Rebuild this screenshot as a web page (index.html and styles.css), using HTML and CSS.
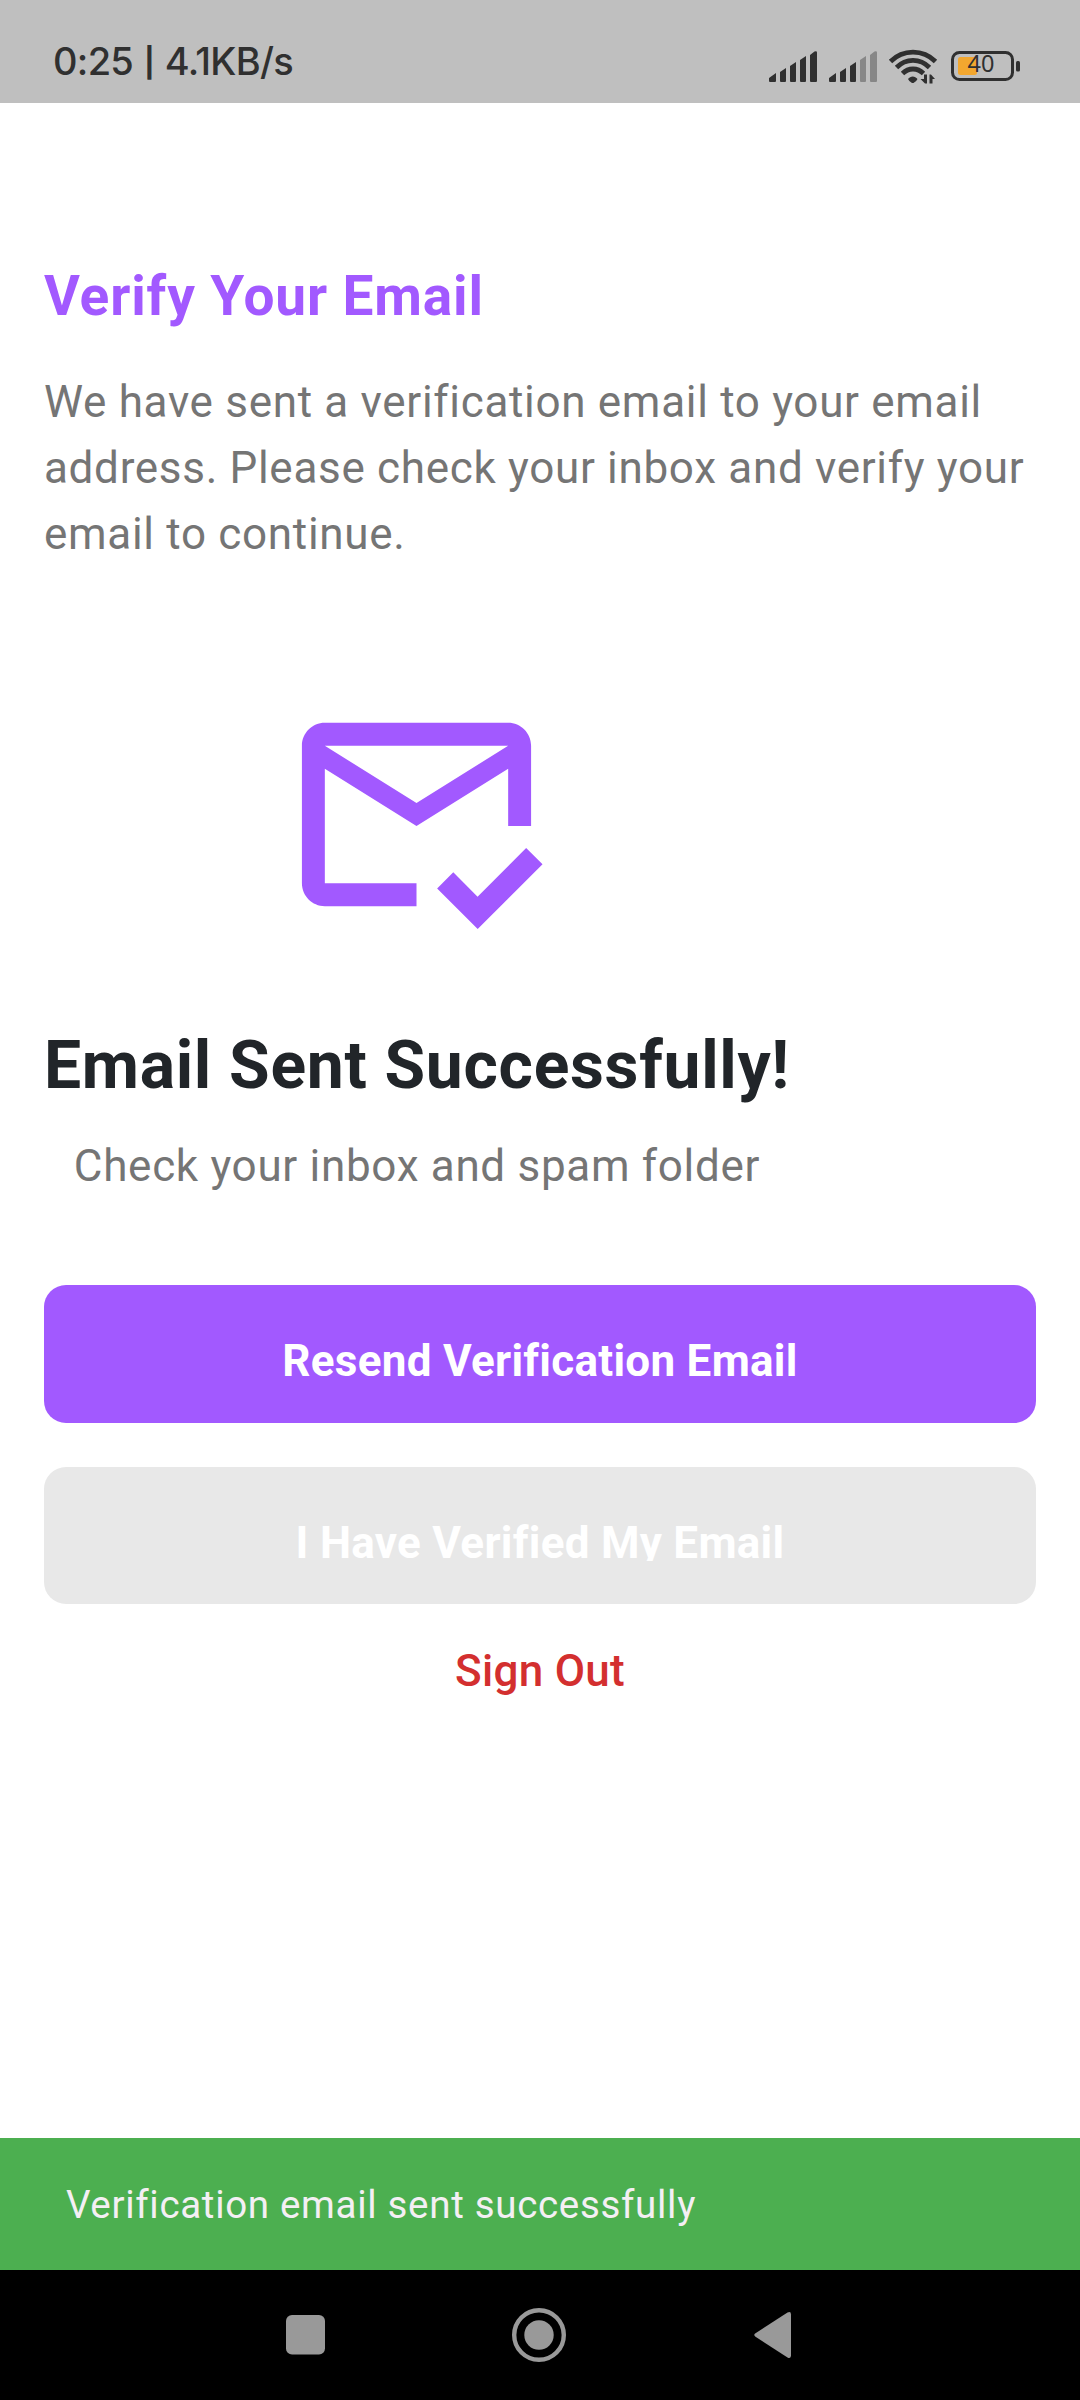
FILE: index.html
```html
<!DOCTYPE html>
<html lang="en">
<head>
<meta charset="utf-8">
<title>Verify Your Email</title>
<link rel="stylesheet" href="styles.css">
</head>
<body>
<div class="screen">
  <header class="status-bar">
    <span class="status-text">0:25 <span class="divider">|</span> 4.1KB/s</span>
    <svg class="status-icons" viewBox="0 0 252 36" aria-hidden="true">
      <g fill="#303030">
        <path d="M0 30V27L7 22V30Q7 31 6 31H1Q0 31 0 30ZM11 21L17 17V30Q17 31 16 31H12Q11 31 11 30ZM21 15L27 11V30Q27 31 26 31H22Q21 31 21 30ZM31 9L37 5V30Q37 31 36 31H32Q31 31 31 30ZM41 4L45.500 0.500Q48 -0.500 48 1.500V30Q48 31 47 31H42Q41 31 41 30Z"/>
        <path d="M60 30V27L67 22V30Q67 31 66 31H61Q60 31 60 30ZM71 21L77 17V30Q77 31 76 31H72Q71 31 71 30ZM81 15L87 11V30Q87 31 86 31H82Q81 31 81 30Z"/>
        <path fill="#878787" d="M91 9L97 5V30Q97 31 96 31H92Q91 31 91 30ZM101 4L105.500 0.500Q108 -0.500 108 1.500V30Q108 31 107 31H102Q101 31 101 30Z"/>
        <path d="M139 28C141.500 24.500 146 24.500 148.500 28Q147.500 30.500 144.500 32H143Q140 30.500 139 28ZM151.500 28H155V23.500H158V32.500H156ZM160.500 23.500H162L166 28H163.500V32.500H160.500Z"/>
      </g>
      <g fill="none" stroke="#303030" stroke-width="4.800">
        <path d="M121.500 10.500C134 -2 154 -2 166.500 10.500M127.500 16.500C137 7 151 7 160.500 16.500M133.500 22.500C139.500 16.500 148.500 16.500 154.500 22.500"/>
      </g>
      <rect x="183.500" y="1.500" width="60" height="27" rx="7" fill="none" stroke="#303030" stroke-width="3"/>
      <rect x="189" y="6" width="19" height="18" rx="2.500" fill="#f2a72f"/>
      <rect x="247" y="10" width="4" height="10.500" rx="1.500" fill="#303030"/>
      <text class="battery-level" x="198.500" y="20.500">40</text>
    </svg>
  </header>

  <main class="content">
    <h1 class="title">Verify Your Email</h1>
    <p class="body-text intro">We have sent a verification email to your email address. Please check your inbox and verify your email to continue.</p>
    <section class="result">
      <svg class="mail-icon" viewBox="0 0 24 24" aria-hidden="true">
        <path d="M12 18H4V8l8 5 8-5v5h2V6c0-1.100-.900-2-2-2H4c-1.100 0-2 .900-2 2v12c0 1.100.900 2 2 2h8v-2zm8-12l-8 5-8-5h16zm-2.660 16l-3.540-3.540 1.410-1.410 2.120 2.120 4.240-4.240L23 16.340 17.340 22z"/>
      </svg>
      <h2 class="result-title">Email Sent Successfully!</h2>
      <p class="body-text result-hint">Check your inbox and spam folder</p>
    </section>
    <div class="actions">
      <button class="button button-primary"><span class="button-label">Resend Verification Email</span></button>
      <button class="button button-disabled" disabled><span class="button-label">I Have Verified My Email</span></button>
      <button class="sign-out">Sign Out</button>
    </div>
  </main>

  <div class="snackbar">Verification email sent successfully</div>

  <nav class="nav-bar">
    <svg class="nav-icons" viewBox="0 0 508 56" fill="#999" aria-hidden="true">
      <rect x="0" y="8" width="39" height="39.500" rx="6"/>
      <circle cx="253" cy="28" r="24.800" fill="none" stroke="#999" stroke-width="4.400"/>
      <circle cx="253" cy="28" r="14.700"/>
      <path d="M469.500 26.300 501.500 5.600Q505 4 505 7.500V48.500Q505 52 501.500 50.400L469.500 29.700Q467 28 469.500 26.300Z"/>
    </svg>
  </nav>
</div>
</body>
</html>
```
FILE: styles.css
```css
* {
  box-sizing: border-box;
}

body {
  margin: 0;
  background: #fff;
  font-family: Roboto, "Liberation Sans", sans-serif;
}

.screen {
  display: flex;
  flex-direction: column;
  width: 1080px;
  height: 2400px;
}

.status-bar {
  display: flex;
  justify-content: space-between;
  flex: none;
  height: 103px;
  padding: 38px 59px 0 53px;
  background: #bfbfbf;
}

.status-text {
  color: #303030;
  font-family: Inter, "Open Sans", sans-serif;
  font-size: 38px;
  font-weight: 500;
  letter-spacing: -0.700px;
  line-height: 46px;
  white-space: pre;
}

.divider {
  margin: 0 1.300px;
  font-size: 29px;
  font-weight: 700;
  line-height: 0;
  vertical-align: 2px;
}

.status-icons {
  width: 252px;
  height: 36px;
  margin-top: 13px;
  overflow: visible;
}

.battery-level {
  fill: #303030;
  font: 23.500px "Noto Sans", sans-serif;
}

.content {
  display: flex;
  flex: 1;
  flex-direction: column;
  min-height: 0;
  padding: 160px 44px 0;
}

.title {
  margin: 0;
  color: #a259ff;
  font-size: 55px;
  font-weight: 700;
  letter-spacing: 0.860px;
  line-height: 66px;
}

.body-text {
  margin: 0;
  color: #757575;
  font-size: 44px;
  letter-spacing: 0.688px;
  line-height: 66px;
}

.intro {
  margin-top: 40px;
}

.result {
  display: flex;
  flex-direction: column;
  align-items: center;
  align-self: flex-start;
  margin-top: 110.400px;
}

.mail-icon {
  width: 275px;
  height: 275px;
  fill: #a259ff;
}

.result-title {
  margin: 73.600px 0 0;
  color: #212529;
  font-size: 66px;
  font-weight: 700;
  letter-spacing: 0.688px;
  line-height: 80px;
}

.result-hint {
  margin-top: 27px;
}

.actions {
  display: flex;
  flex-direction: column;
  align-items: center;
  margin-top: 86.300px;
}

.button {
  display: flex;
  align-items: center;
  justify-content: center;
  width: 100%;
  height: 137.500px;
  padding: 0;
  border: 0;
  border-radius: 22px;
  color: #fff;
  font: 700 44px/64px Roboto, sans-serif;
  letter-spacing: 0.275px;
}

.button-primary {
  background: #a259ff;
}

.button-disabled {
  margin-top: 44px;
  background: #e8e8e8;
}

.button-label {
  height: 50px;
  overflow: hidden;
}

.sign-out {
  margin-top: 34px;
  padding: 0;
  border: 0;
  background: none;
  color: #d32f2f;
  font: 500 44px/66px Roboto, sans-serif;
  letter-spacing: 0.275px;
}

.snackbar {
  flex: none;
  height: 132px;
  padding: 1px 66px 0;
  background: #4caf50;
  color: #f4eff4;
  font-size: 38.500px;
  letter-spacing: 0.688px;
  line-height: 132px;
}

.nav-bar {
  display: flex;
  justify-content: center;
  flex: none;
  height: 130px;
  padding-top: 37px;
  background: #000;
}

.nav-icons {
  width: 508px;
  height: 56px;
}
```
